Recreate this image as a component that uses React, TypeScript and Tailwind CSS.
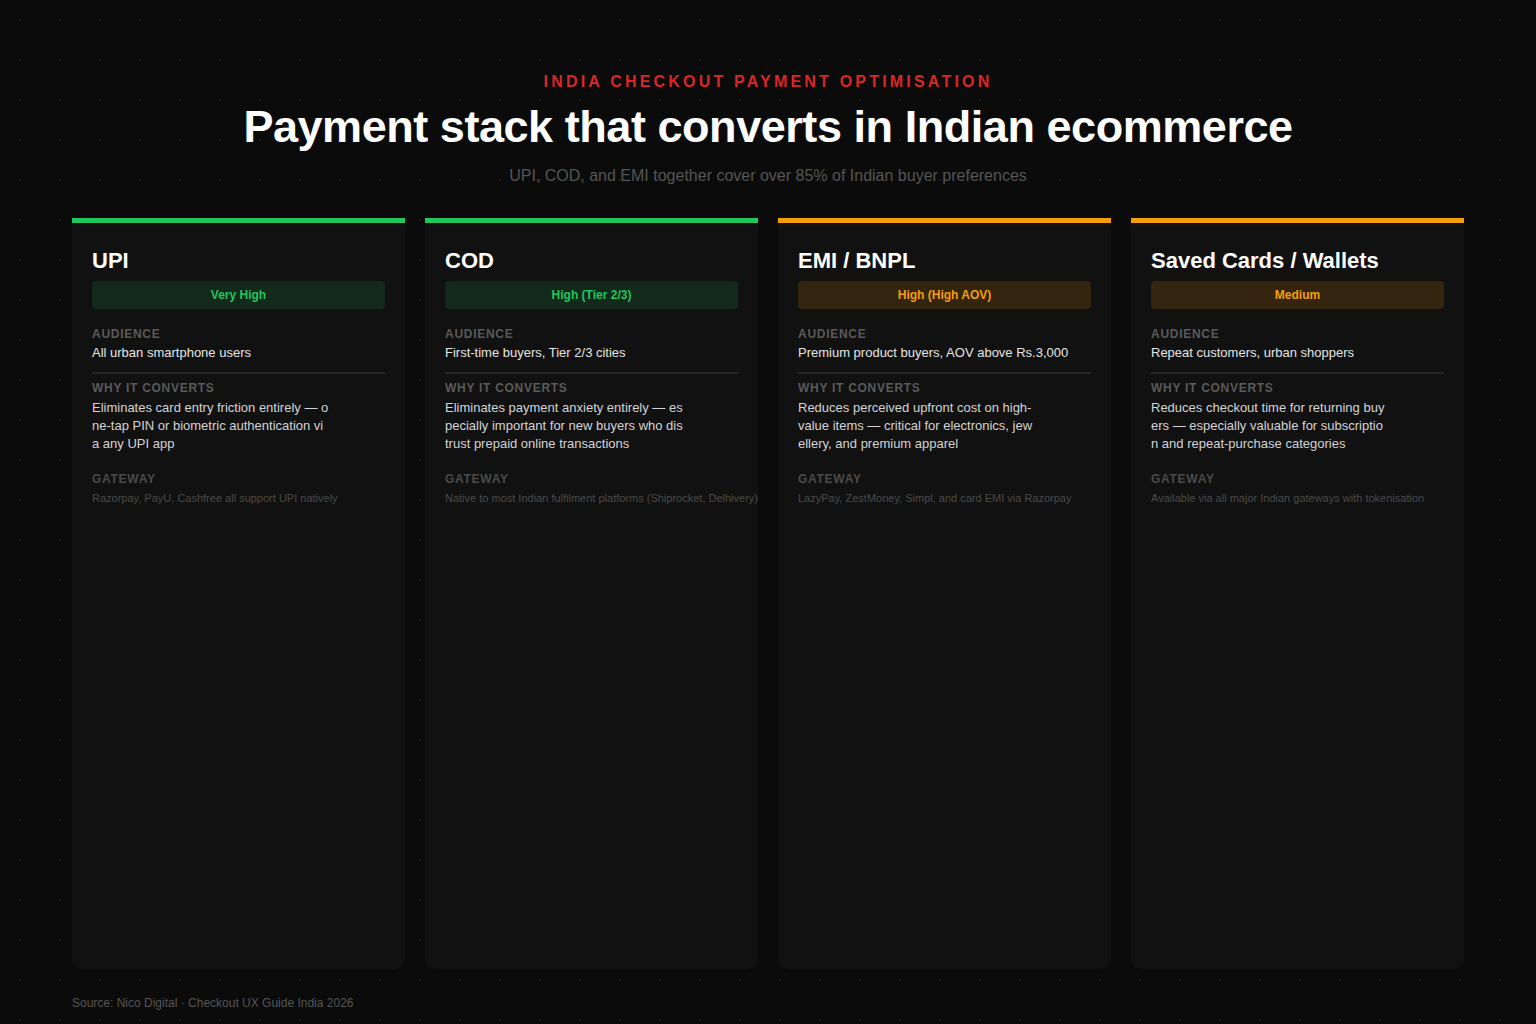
const cards = [
  {
    title: "UPI",
    level: "Very High",
    tone: "green",
    audience: "All urban smartphone users",
    why: "Eliminates card entry friction entirely — one-tap PIN or biometric authentication via any UPI app",
    gateway: "Razorpay, PayU, Cashfree all support UPI natively",
  },
  {
    title: "COD",
    level: "High (Tier 2/3)",
    tone: "green",
    audience: "First-time buyers, Tier 2/3 cities",
    why: "Eliminates payment anxiety entirely — especially important for new buyers who distrust prepaid online transactions",
    gateway: "Native to most Indian fulfilment platforms (Shiprocket, Delhivery)",
  },
  {
    title: "EMI / BNPL",
    level: "High (High AOV)",
    tone: "orange",
    audience: "Premium product buyers, AOV above Rs.3,000",
    why: "Reduces perceived upfront cost on high-value items — critical for electronics, jewellery, and premium apparel",
    gateway: "LazyPay, ZestMoney, Simpl, and card EMI via Razorpay",
  },
  {
    title: "Saved Cards / Wallets",
    level: "Medium",
    tone: "orange",
    audience: "Repeat customers, urban shoppers",
    why: "Reduces checkout time for returning buyers — especially valuable for subscription and repeat-purchase categories",
    gateway: "Available via all major Indian gateways with tokenisation",
  },
];

const App = () => {
  return (
    <div
      className="w-[1536px] h-[1024px] bg-[#0b0b0b] flex flex-col px-[72px] pt-[72px] overflow-hidden"
      style={{
        fontFamily: '"Liberation Sans", Arial, sans-serif',
        backgroundImage: "radial-gradient(circle, #1a1a1a 1px, transparent 1.2px)",
        backgroundSize: "40px 40px",
      }}
    >
      {/* Heading */}
      <div className="text-center">
        <p className="text-[16px] font-bold tracking-[0.2em] text-[#dc2626] leading-5">
          INDIA CHECKOUT PAYMENT OPTIMISATION
        </p>
        <h1 className="mt-[8px] text-[45px] font-bold text-white leading-[54px] tracking-[-0.01em]">
          Payment stack that converts in Indian ecommerce
        </h1>
        <p className="mt-[12px] text-[16px] text-[#555] leading-5">
          UPI, COD, and EMI together cover over 85% of Indian buyer preferences
        </p>
      </div>

      {/* Cards */}
      <div className="mt-[32px] grid grid-cols-4 gap-[20px] h-[751px]">
        {cards.map((card, i) => (
          <div
            key={i}
            className={`bg-[#111111] rounded-b-[10px] border-t-[5px] px-[20px] pt-[24px] ${
              card.tone === "green" ? "border-[#22c55e]" : "border-[#f59e0b]"
            }`}
          >
            <h3 className="text-[22px] font-bold text-white leading-7">{card.title}</h3>
            <div
              className={`mt-[6px] h-[28px] rounded-[4px] flex items-center justify-center text-[12px] font-bold ${
                card.tone === "green" ? "bg-[#13291b] text-[#22c55e]" : "bg-[#33250f] text-[#f59e0b]"
              }`}
            >
              {card.level}
            </div>
            <p className="mt-[17px] text-[12px] font-bold tracking-[0.06em] text-[#5a5a5a] leading-4">AUDIENCE</p>
            <p className="mt-[2px] text-[13px] text-[#e5e5e5] leading-[18px]">{card.audience}</p>
            <div className="mt-[10px] h-[2px] bg-[#262626]" />
            <p className="mt-[6px] text-[12px] font-bold tracking-[0.06em] text-[#5a5a5a] leading-4">WHY IT CONVERTS</p>
            <p className="mt-[3px] w-[238px] break-all text-[13px] text-[#d4d4d4] leading-[18px]">{card.why}</p>
            <p className="mt-[18px] text-[12px] font-bold tracking-[0.06em] text-[#4a4a4a] leading-4">GATEWAY</p>
            <p className="mt-[3px] text-[11px] text-[#4a4a4a] whitespace-nowrap leading-4">{card.gateway}</p>
          </div>
        ))}
      </div>

      <p className="mt-[25px] text-[12px] text-[#555]">Source: Nico Digital · Checkout UX Guide India 2026</p>
    </div>
  );
};

export default App;
